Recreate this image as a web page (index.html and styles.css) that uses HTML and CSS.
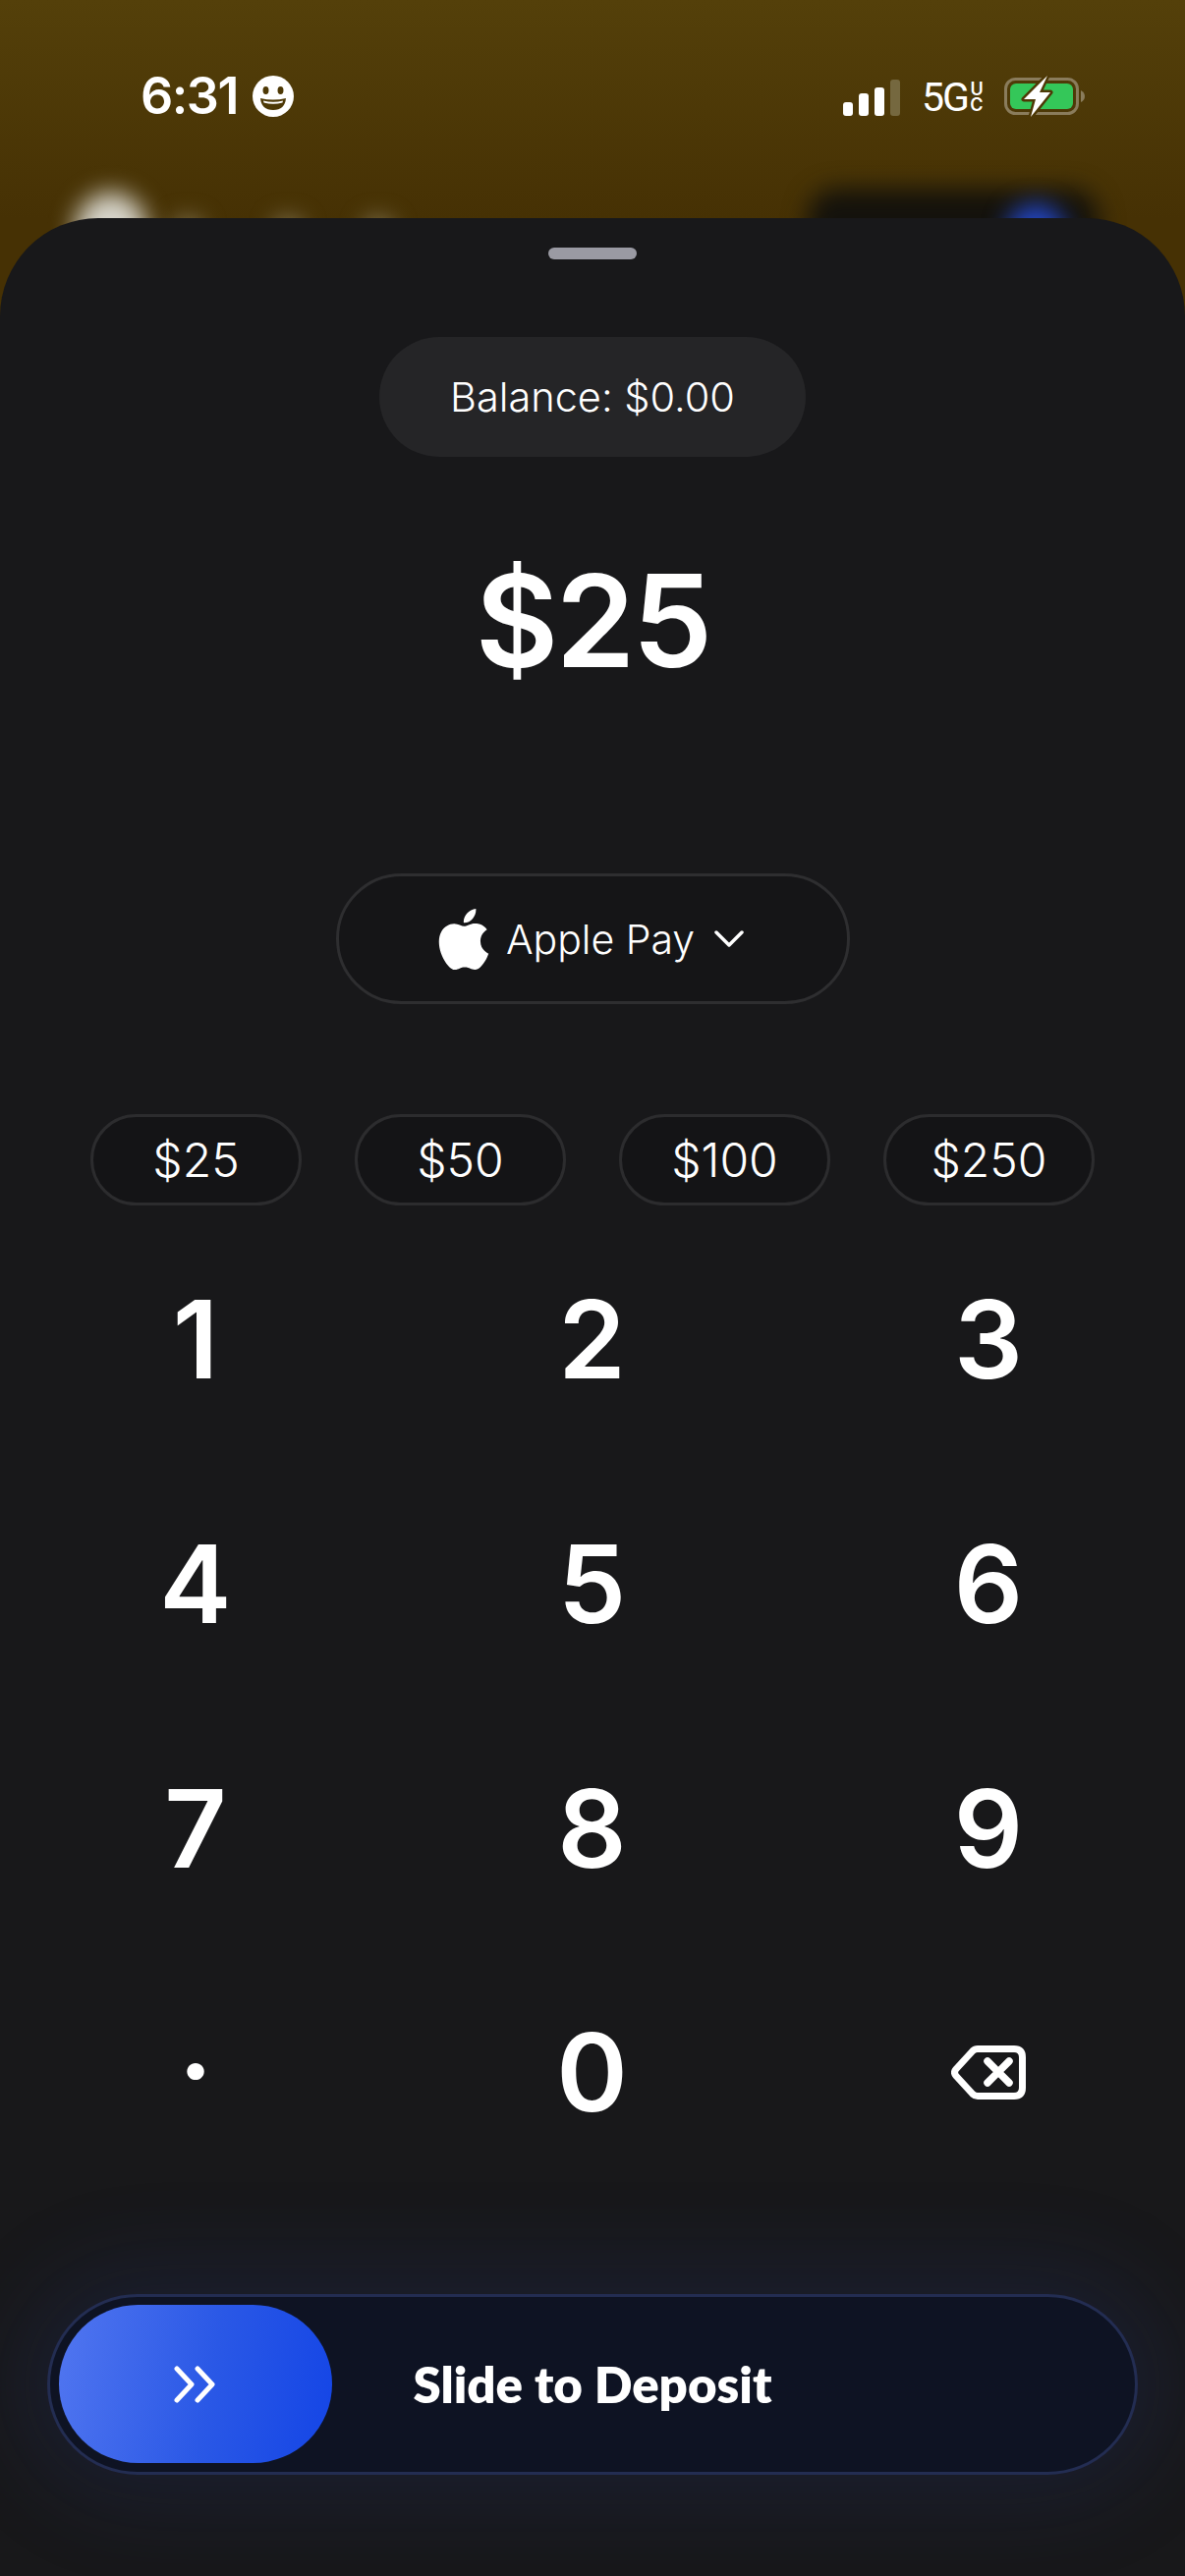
FILE: index.html
```html
<!DOCTYPE html>
<html lang="en">
<head>
    <meta charset="UTF-8">
    <meta name="viewport" content="width=device-width, initial-scale=1.0">
    <title>Deposit</title>
    <link rel="stylesheet" href="styles.css">
</head>
<body>

<div class="screen">
    <!-- blurred page behind the sheet -->
    <div class="blob blob-white"></div>
    <div class="blob blob-soft blob-a"></div>
    <div class="blob blob-soft blob-b"></div>
    <div class="blob blob-soft blob-c"></div>
    <div class="blob blob-dark"></div>
    <div class="blob blob-blue"></div>

    <div class="status-bar">
        <div class="status-left">
            <span class="clock">6:31</span>
            <svg class="smiley" viewBox="0 0 42 42">
                <circle cx="21" cy="21" r="21" fill="#fff"/>
                <ellipse cx="13.500" cy="15" rx="3" ry="4" fill="#4d3805"/>
                <ellipse cx="28.500" cy="15" rx="3" ry="4" fill="#4d3805"/>
                <path d="M8 23 Q21 26 34 23 Q33 35 21 35 Q9 35 8 23Z" fill="#4d3805"/>
                <path d="M11 25.500 Q21 28 31 25.500 L30.500 27.500 Q21 30 11.500 27.500Z" fill="#fff"/>
            </svg>
        </div>
        <div class="status-right">
            <div class="signal">
                <span class="bar bar-1"></span>
                <span class="bar bar-2"></span>
                <span class="bar bar-3"></span>
                <span class="bar bar-4"></span>
            </div>
            <div class="network">
                <span class="network-main">5G</span>
                <span class="network-sub">U C</span>
            </div>
            <svg class="battery" viewBox="0 0 83 42">
                <rect x="1.500" y="3.500" width="73" height="35" rx="10" fill="none" stroke="#8a7c5c" stroke-width="3"/>
                <path d="M78 15 Q82 17 82 21 Q82 25 78 27Z" fill="#8a7c5c"/>
                <rect x="6" y="8" width="64" height="26" rx="6" fill="#34c759"/>
                <path d="M44 0 L20 24 H32 L27 42 L47 17 H36 Z" fill="#fff" stroke="#4d3805" stroke-width="5" stroke-linejoin="round" paint-order="stroke"/>
            </svg>
        </div>
    </div>

    <div class="sheet">
        <div class="handle"></div>

        <div class="balance">Balance: $0.00</div>
        <div class="amount">$25</div>

        <div class="pay-method">
            <svg class="apple" viewBox="0 0 24 24">
                <path fill="#fff" d="M12.152 6.896c-.948 0-2.415-1.078-3.96-1.04-2.04.027-3.91 1.183-4.961 3.014-2.117 3.675-.546 9.103 1.519 12.09 1.013 1.454 2.208 3.09 3.792 3.039 1.52-.065 2.09-.987 3.935-.987 1.831 0 2.35.987 3.96.948 1.637-.026 2.676-1.48 3.676-2.948 1.156-1.688 1.636-3.325 1.662-3.415-.039-.013-3.182-1.221-3.22-4.857-.026-3.04 2.48-4.494 2.597-4.559-1.429-2.09-3.623-2.324-4.39-2.376-2-.156-3.675 1.09-4.61 1.09zM15.53 3.83c.843-1.012 1.4-2.427 1.245-3.83-1.207.052-2.662.805-3.532 1.818-.78.896-1.454 2.338-1.273 3.714 1.338.104 2.715-.688 3.559-1.701"/>
            </svg>
            <span class="pay-label">Apple Pay</span>
            <svg class="chevron" viewBox="0 0 30 18">
                <path d="M2 2 L15 15 L28 2" fill="none" stroke="#fff" stroke-width="3.500" stroke-linecap="round" stroke-linejoin="round"/>
            </svg>
        </div>

        <div class="presets">
            <div class="preset">$25</div>
            <div class="preset">$50</div>
            <div class="preset">$100</div>
            <div class="preset">$250</div>
        </div>

        <div class="keypad">
            <div class="key">1</div>
            <div class="key">2</div>
            <div class="key">3</div>
            <div class="key">4</div>
            <div class="key">5</div>
            <div class="key">6</div>
            <div class="key">7</div>
            <div class="key">8</div>
            <div class="key">9</div>
            <div class="key key-dot">.</div>
            <div class="key">0</div>
            <div class="key">
                <svg class="backspace" viewBox="0 0 76 55">
                    <path d="M27 3.500 H64 Q72.500 3.500 72.500 12 V43 Q72.500 51.500 64 51.500 H27 Q24 51.500 22 49.500 L5 31 Q2 27.500 5 24 L22 5.500 Q24 3.500 27 3.500Z" fill="none" stroke="#fff" stroke-width="7" stroke-linejoin="round"/>
                    <path d="M37 16 L59 38 M59 16 L37 38" fill="none" stroke="#fff" stroke-width="7.500" stroke-linecap="round"/>
                </svg>
            </div>
        </div>

        <div class="slider">
            <div class="slider-thumb">
                <svg class="arrows" viewBox="0 0 44 38">
                    <path d="M3 3 L18 19 L3 35 M24 3 L39 19 L24 35" fill="none" stroke="#fff" stroke-width="5" stroke-linecap="round" stroke-linejoin="round"/>
                </svg>
            </div>
            <span class="slider-label">Slide to Deposit</span>
        </div>
    </div>
</div>

</body>
</html>
```

FILE: styles.css
```css
* {
    box-sizing: border-box;
}
html, body {
    margin: 0;
    padding: 0;
    background-color: #18181a;
}
.screen {
    position: relative;
    width: 1206px;
    height: 2622px;
    overflow: hidden;
    display: flex;
    flex-direction: column;
    font-family: Inter, "Liberation Sans", sans-serif;
    color: #fff;
    background: linear-gradient(180deg, #54400a 0, #463104 222px);
}

/* blurred stuff behind the sheet */
.blob {
    position: absolute;
    border-radius: 50%;
    filter: blur(12px);
}
.blob-white {
    left: 76px;
    top: 196px;
    width: 74px;
    height: 80px;
    background-color: #d8d6cc;
}
.blob-soft {
    top: 222px;
    width: 30px;
    height: 30px;
    background-color: #8f8565;
}
.blob-a { left: 176px; }
.blob-b { left: 278px; }
.blob-c { left: 370px; }
.blob-dark {
    left: 822px;
    top: 192px;
    width: 296px;
    height: 90px;
    border-radius: 30px;
    background-color: #14120c;
}
.blob-blue {
    left: 1024px;
    top: 208px;
    width: 60px;
    height: 60px;
    background-color: #2347c8;
}

.status-bar {
    position: relative;
    height: 222px;
    flex-shrink: 0;
    padding: 77px 101px 0 143px;
    display: flex;
    justify-content: space-between;
    align-items: flex-start;
}
.status-left {
    display: flex;
    align-items: center;
    gap: 15px;
    height: 42px;
}
.clock {
    font-size: 52px;
    font-weight: 600;
    line-height: 42px;
    letter-spacing: -1.500px;
}
.smiley {
    width: 42px;
    height: 42px;
}
.status-right {
    display: flex;
    align-items: flex-start;
}
.signal {
    display: flex;
    align-items: flex-end;
    gap: 6px;
    height: 39px;
    margin-top: 2px;
    margin-right: 22px;
}
.bar {
    width: 10px;
    border-radius: 3px;
    background-color: #fff;
}
.bar-1 { height: 14px; }
.bar-2 { height: 23px; }
.bar-3 { height: 29px; }
.bar-4 {
    height: 37px;
    background-color: #75683f;
}
.network {
    display: flex;
    align-items: center;
    height: 32px;
    margin-top: 6px;
    gap: 3px;
    margin-right: 21px;
}
.network-main {
    width: 46px;
    font-family: Roboto, "Liberation Sans", sans-serif;
    font-size: 41px;
    line-height: 32px;
    letter-spacing: -2px;
}
.network-sub {
    width: 14px;
    font-size: 18px;
    font-weight: 600;
    line-height: 16px;
    text-align: center;
}
.battery {
    width: 83px;
    height: 42px;
}

.sheet {
    position: relative;
    flex: 1;
    display: flex;
    flex-direction: column;
    align-items: center;
    background-color: #18181a;
    border-radius: 100px 100px 0 0;
}
.handle {
    width: 90px;
    height: 12px;
    margin-top: 30px;
    border-radius: 6px;
    background-color: #9a9aa3;
}
.balance {
    width: 434px;
    height: 122px;
    margin-top: 79px;
    border-radius: 61px;
    background-color: #252527;
    display: flex;
    align-items: center;
    justify-content: center;
    font-size: 41.500px;
    font-weight: 300;
}
.amount {
    margin-top: 82px;
    font-size: 130px;
    font-weight: 600;
    line-height: 170px;
    letter-spacing: -3px;
}
.pay-method {
    width: 523px;
    height: 133px;
    margin-top: 172px;
    padding-right: 8px;
    border: 3px solid #2e2e30;
    border-radius: 67px;
    background-color: #151517;
    display: flex;
    align-items: center;
    justify-content: center;
}
.apple {
    width: 62px;
    height: 62px;
    margin-right: 12px;
}
.pay-label {
    font-size: 41px;
    font-weight: 300;
    margin-right: 20px;
}
.chevron {
    width: 30px;
    height: 18px;
}
.presets {
    width: 100%;
    margin-top: 112px;
    padding: 0 92px;
    display: flex;
    justify-content: space-between;
}
.preset {
    width: 215px;
    height: 93px;
    border: 3px solid #2c2c2e;
    border-radius: 47px;
    background-color: #141416;
    display: flex;
    align-items: center;
    justify-content: center;
    font-size: 48px;
    font-weight: 300;
}
.keypad {
    width: 100%;
    margin-top: 12px;
    padding: 0 98px;
    display: grid;
    grid-template-columns: repeat(3, 202px);
    grid-auto-rows: 248.700px;
    column-gap: 201.500px;
}
.key {
    display: flex;
    align-items: center;
    justify-content: center;
    font-size: 110px;
    font-weight: 600;
}
.key-dot {
    padding-bottom: 66px;
}
.backspace {
    width: 76px;
    height: 55px;
}
.slider {
    position: relative;
    width: 1110px;
    height: 184px;
    margin-top: 101px;
    border: 3px solid #232d52;
    border-radius: 92px;
    background-color: #0e1323;
    box-shadow: 0 0 90px 30px rgba(40, 60, 150, 0.16);
    padding-left: 9px;
    display: flex;
    align-items: center;
}
.slider-thumb {
    width: 278px;
    height: 161px;
    border-radius: 81px;
    background: linear-gradient(100deg, #5176f0 0, #2a58e6 55%, #1445e6 100%);
    display: flex;
    align-items: center;
    justify-content: center;
    flex-shrink: 0;
}
.arrows {
    width: 44px;
    height: 38px;
}
.slider-label {
    position: absolute;
    left: 0;
    right: 0;
    text-align: center;
    font-family: Lato, "Liberation Sans", sans-serif;
    font-size: 51px;
    font-weight: 800;
}
```
